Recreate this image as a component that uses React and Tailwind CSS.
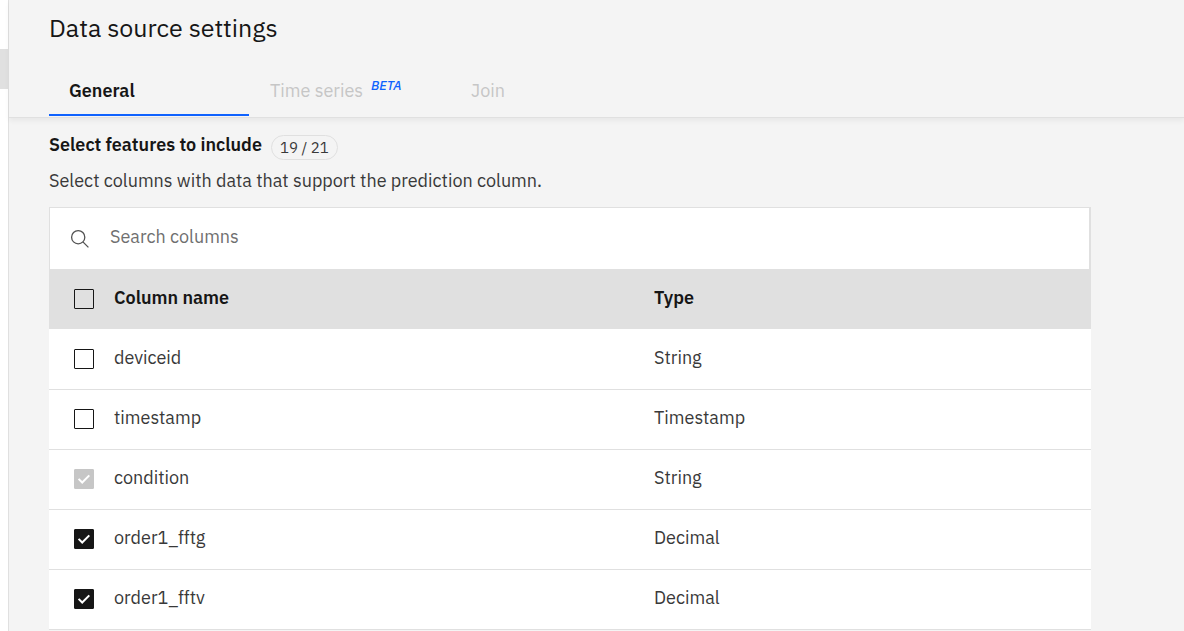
import { useState } from "react";

const columns = [
  { name: "deviceid", type: "String", checked: false },
  { name: "timestamp", type: "Timestamp", checked: false },
  { name: "condition", type: "String", checked: true, locked: true },
  { name: "order1_fftg", type: "Decimal", checked: true },
  { name: "order1_fftv", type: "Decimal", checked: true },
];

function Checkbox({ label, ...props }) {
  return (
    <label className="relative block size-5">
      <input
        type="checkbox"
        aria-label={label}
        className="peer block size-5 appearance-none rounded-[1px] border border-[#161616] checked:bg-[#161616] disabled:border-[#c6c6c6] disabled:bg-[#c6c6c6]"
        {...props}
      />
      <svg
        viewBox="0 0 20 20"
        className="pointer-events-none absolute inset-0 hidden size-5 peer-checked:block"
        fill="none"
        stroke="#fff"
        strokeWidth="2"
        aria-hidden="true"
      >
        <path d="M4.6 9.9 L8.2 13.5 L15.3 6.4" />
      </svg>
    </label>
  );
}

function Tabs() {
  return (
    <div role="tablist" className="flex h-[50px] gap-px pl-10">
      <button
        role="tab"
        aria-selected="true"
        className="w-[200px] border-b-2 border-[#0f62fe] px-5 pt-0.5 text-left font-semibold text-[#161616]"
      >
        General
      </button>
      <button
        role="tab"
        aria-selected="false"
        disabled
        className="flex w-[200px] items-center gap-2 border-b-2 border-transparent px-5 pt-0.5 text-[#c6c6c6]"
      >
        Time series
        <em className="pb-2.5 text-[13px] leading-4 font-medium text-[#0f62fe]">BETA</em>
      </button>
      <button
        role="tab"
        aria-selected="false"
        disabled
        className="w-[200px] border-b-2 border-transparent px-5 pt-0.5 text-left text-[#c6c6c6]"
      >
        Join
      </button>
    </div>
  );
}

export default function App() {
  const [query, setQuery] = useState("");
  const rows = columns.filter((c) => c.name.includes(query.toLowerCase()));

  return (
    <div className="flex min-h-screen bg-[#f4f4f4] font-['IBM_Plex_Sans',Roboto,sans-serif] text-[18px] leading-6 text-[#393939]">
      <aside className="w-[9px] shrink-0 border-r border-[#e0e0e0] bg-white pt-[49px]">
        <div className="h-10 bg-[#e0e0e0]" />
      </aside>
      <main className="min-w-0 flex-1">
        <header className="border-b border-[#e0e0e0] pb-px shadow-[0_3px_5px_rgba(0,0,0,0.05)]">
          <h1 className="pt-3 pb-[22px] pl-10 text-[25px] leading-8 text-[#161616]">
            Data source settings
          </h1>
          <Tabs />
        </header>
        <section className="pr-[93px] pl-10">
          <div className="flex items-center gap-[9px] pt-[15px]">
            <h2 className="pb-[3px] font-semibold text-[#161616]">Select features to include</h2>
            <span className="mt-0.5 rounded-full border border-[#e0e0e0] px-2 text-[15px] leading-[23px]">
              19 / 21
            </span>
          </div>
          <p className="pt-[9px] pb-3.5">
            Select columns with data that support the prediction column.
          </p>
          <label className="flex h-[62px] items-center border border-r-2 border-b-0 border-[#e0e0e0] bg-white pl-5">
            <svg
              viewBox="0 0 20 20"
              className="size-5 shrink-0"
              fill="none"
              stroke="#525252"
              strokeWidth="1.3"
              aria-hidden="true"
            >
              <circle cx="8.2" cy="8.2" r="6.6" />
              <path d="M12.9 12.9 L18.4 18.4" />
            </svg>
            <input
              type="text"
              aria-label="Search columns"
              value={query}
              onChange={(e) => setQuery(e.target.value)}
              placeholder="Search columns"
              className="h-full min-w-0 flex-1 bg-transparent pb-1 pl-5 outline-none placeholder:text-[#6f6f6f]"
            />
          </label>
          <table className="w-full table-fixed border-separate border-spacing-0 border-b border-[#e0e0e0] text-left">
            <colgroup>
              <col className="w-[45px]" />
              <col className="w-[540px]" />
              <col />
            </colgroup>
            <thead>
              <tr className="h-[60px] bg-[#e0e0e0] text-[#161616]">
                <th className="p-0 pl-[25px]">
                  <Checkbox label="Select all columns" />
                </th>
                <th className="p-0 pb-0.5 pl-5 font-semibold">Column name</th>
                <th className="p-0 pb-0.5 pl-5 font-semibold">Type</th>
              </tr>
            </thead>
            <tbody>
              {rows.map((c) => (
                <tr key={c.name} className="group h-[60px] bg-white">
                  <td className="border-t border-[#e0e0e0] p-0 pb-px pl-[25px] group-first:border-white">
                    <Checkbox
                      label={`Include ${c.name}`}
                      defaultChecked={c.checked}
                      disabled={c.locked}
                    />
                  </td>
                  <td className="border-t border-[#e0e0e0] p-0 pb-[3px] pl-5 group-first:border-white">
                    {c.name}
                  </td>
                  <td className="border-t border-[#e0e0e0] p-0 pb-[3px] pl-5 group-first:border-white">
                    {c.type}
                  </td>
                </tr>
              ))}
            </tbody>
          </table>
        </section>
      </main>
    </div>
  );
}
